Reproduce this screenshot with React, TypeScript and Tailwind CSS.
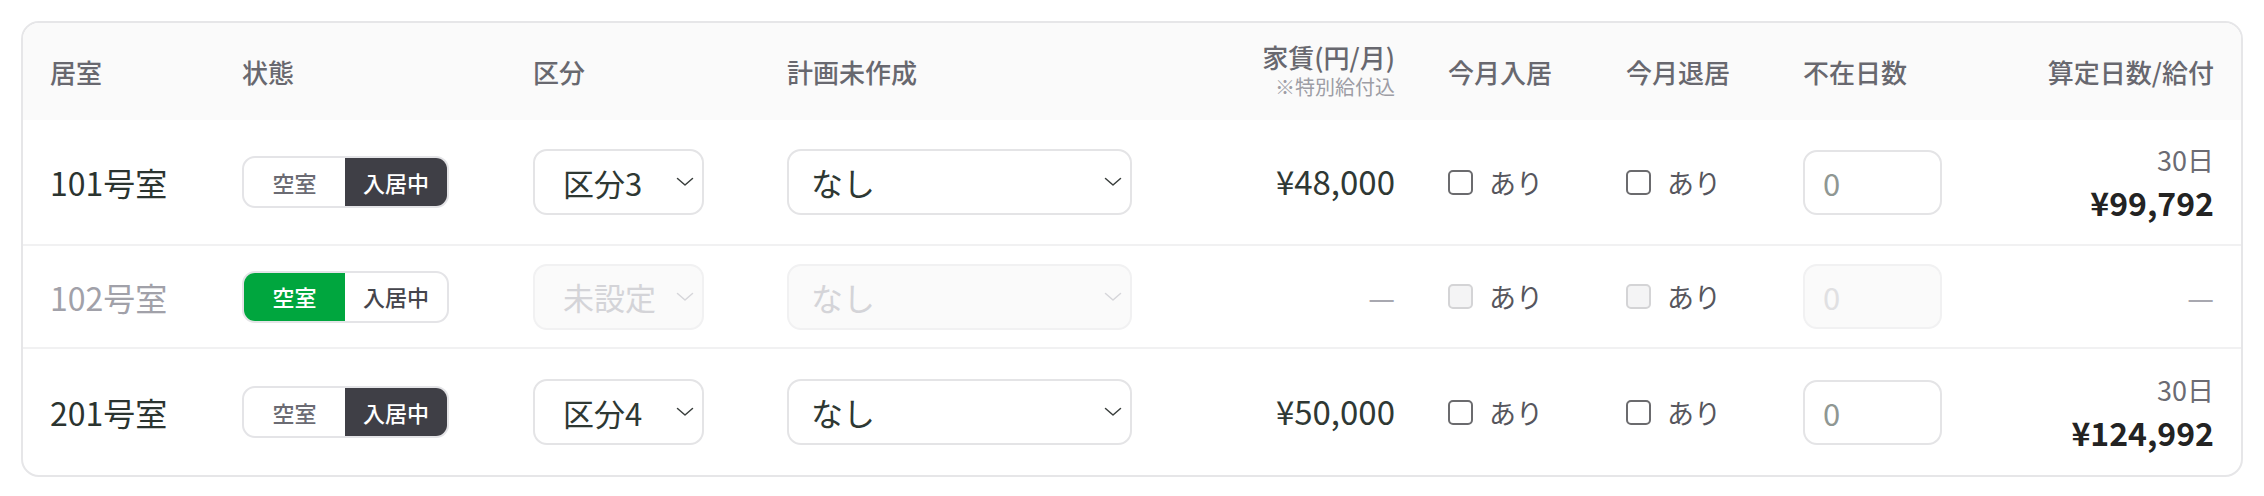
import React from "react";

type Row = {
  room: string;
  vacant: boolean;
  kubun: string;
  plan: string;
  rent: string | null;
  days: string | null;
  total: string | null;
};

const rows: Row[] = [
  { room: "101号室", vacant: false, kubun: "区分3", plan: "なし", rent: "¥48,000", days: "30日", total: "¥99,792" },
  { room: "102号室", vacant: true, kubun: "未設定", plan: "なし", rent: null, days: null, total: null },
  { room: "201号室", vacant: false, kubun: "区分4", plan: "なし", rent: "¥50,000", days: "30日", total: "¥124,992" },
];

const GRID =
  "grid grid-cols-[192px_291px_254px_363px_245px_231px_177px_200px_1fr] items-center px-[27px]";

function Chevron({ disabled }: { disabled: boolean }) {
  return (
    <svg width="18" height="10" viewBox="0 0 18 10" fill="none" className="shrink-0">
      <polyline
        points="1.5,1.5 9,8 16.5,1.5"
        stroke={disabled ? "#d6d6da" : "#3a3f3d"}
        strokeWidth="1.5"
        strokeLinecap="round"
        strokeLinejoin="round"
      />
    </svg>
  );
}

function SelectBox({ text, disabled, wide }: { text: string; disabled: boolean; wide?: boolean }) {
  return (
    <div
      className={
        "flex h-[66px] items-center justify-between rounded-[14px] border-2 pr-[8px] " +
        (wide ? "w-[345px] pl-[22px] " : "w-[171px] pl-[28px] ") +
        (disabled ? "border-[#f1f1f2] bg-[#fafafa] text-[#d4d4d8]" : "border-[#e4e4e6] bg-white text-[#2e3833]")
      }
    >
      <span className={(wide ? "text-[32px]" : "text-[31px]") + " leading-none"}>{text}</span>
      <Chevron disabled={disabled} />
    </div>
  );
}

function Toggle({ vacant }: { vacant: boolean }) {
  return (
    <div className="flex h-[52px] w-[207px] overflow-hidden rounded-[13px] border-2 border-[#e4e4e7] bg-white">
      <div
        className={
          "flex w-[101px] items-center justify-center text-[22px] font-medium " +
          (vacant ? "bg-[#00a63e] text-white" : "text-[#6b6b73]")
        }
      >
        空室
      </div>
      <div
        className={
          "flex flex-1 items-center justify-center text-[22px] font-medium " +
          (!vacant ? "bg-[#3f3f46] text-white" : "text-[#45454c]")
        }
      >
        入居中
      </div>
    </div>
  );
}

function Check({ disabled }: { disabled: boolean }) {
  return (
    <div className="flex items-center gap-[16px]">
      <span
        className={
          "block h-[25px] w-[25px] rounded-[5px] border-2 " +
          (disabled ? "border-[#d4d4d6] bg-[#f4f4f5]" : "border-[#6b6b6e] bg-white")
        }
      />
      <span className="text-[27px] leading-none text-[#56565d]">あり</span>
    </div>
  );
}

function NumInput({ disabled }: { disabled: boolean }) {
  return (
    <div
      className={
        "flex h-[65px] w-[139px] items-center rounded-[14px] border-2 pl-[18px] " +
        (disabled ? "border-[#f1f1f2] bg-[#fafafa] text-[#e0e0e2]" : "border-[#e4e4e6] bg-white text-[#8f9793]")
      }
    >
      <span className="text-[31px] leading-none">0</span>
    </div>
  );
}

export default function App() {
  return (
    <div
      className="min-h-[496px] bg-white p-[21px]"
      style={{ fontFamily: '"Noto Sans CJK JP", "Noto Sans", sans-serif' }}
    >
      <div className="overflow-hidden rounded-[18px] border-2 border-[#e6e6e8] bg-white">
        {/* header */}
        <div className={GRID + " h-[97px] bg-[#fafafa] text-[26px] font-medium text-[#68686f]"}>
          <div>居室</div>
          <div>状態</div>
          <div>区分</div>
          <div>計画未作成</div>
          <div className="flex flex-col items-end">
            <span className="leading-[31px]">家賃(円/月)</span>
            <span className="text-[20px] font-normal leading-[30px] text-[#9d9da5]">※特別給付込</span>
          </div>
          <div className="pl-[53px]">今月入居</div>
          <div>今月退居</div>
          <div>不在日数</div>
          <div className="text-right">算定日数/給付</div>
        </div>

        {rows.map((r, i) => {
          const disabled = r.vacant;
          const h = i === 0 ? "h-[126px]" : i === 1 ? "h-[103px]" : "h-[126px]";
          return (
            <div
              key={r.room}
              className={GRID + " " + h + (i < rows.length - 1 ? " border-b-2 border-[#f1f1f2]" : "")}
            >
              <div className={"text-[32px] " + (disabled ? "text-[#a1a1a9]" : "text-[#2b3430]")}>{r.room}</div>
              <div>
                <Toggle vacant={r.vacant} />
              </div>
              <div>
                <SelectBox text={r.kubun} disabled={disabled} />
              </div>
              <div>
                <SelectBox text={r.plan} disabled={disabled} wide />
              </div>
              <div className="text-right">
                {r.rent ? (
                  <span className="text-[33px] text-[#2f3834]">{r.rent}</span>
                ) : (
                  <span className="text-[30px] text-[#a8a8b0]">—</span>
                )}
              </div>
              <div className="pl-[53px]">
                <Check disabled={disabled} />
              </div>
              <div>
                <Check disabled={disabled} />
              </div>
              <div>
                <NumInput disabled={disabled} />
              </div>
              <div className="flex flex-col items-end">
                {r.total ? (
                  <>
                    <span className="text-[27px] leading-[40px] text-[#6b6b73]">{r.days}</span>
                    <span className="text-[32px] font-bold leading-[44px] text-[#232323]">{r.total}</span>
                  </>
                ) : (
                  <span className="text-[30px] text-[#a8a8b0]">—</span>
                )}
              </div>
            </div>
          );
        })}
      </div>
    </div>
  );
}
